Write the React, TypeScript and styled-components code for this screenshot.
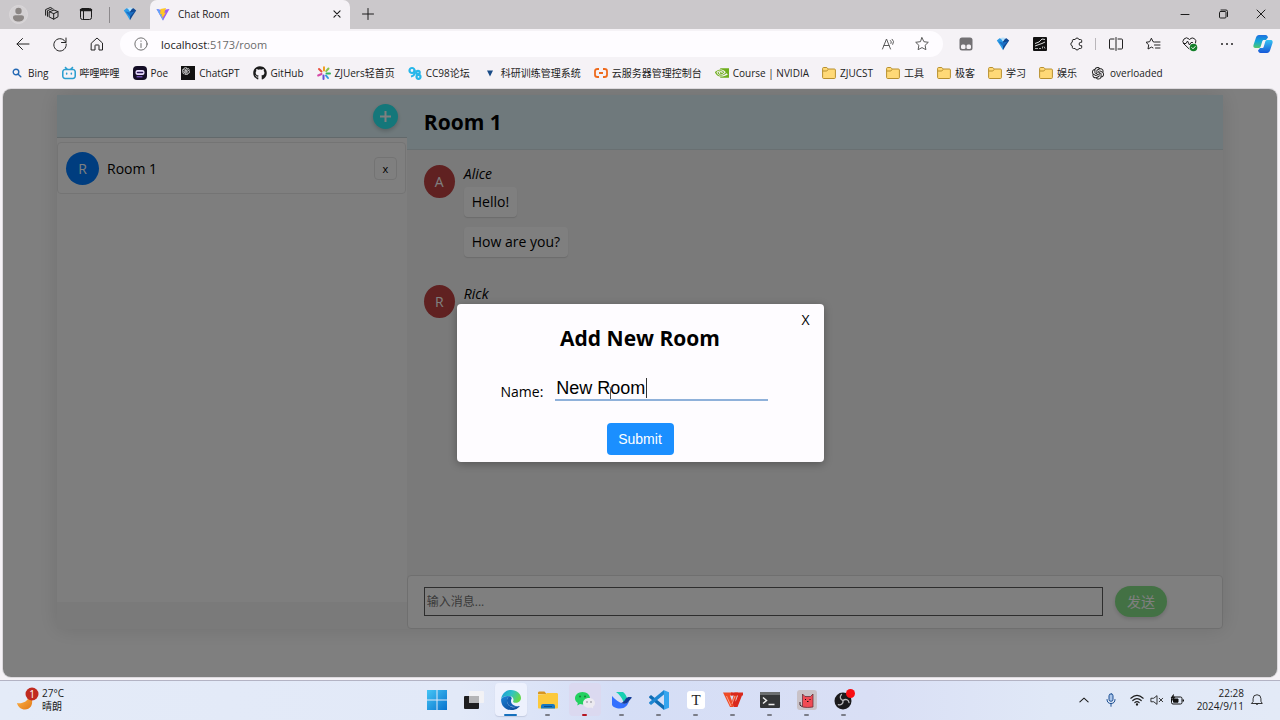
import React, { useState } from "react";
import styled, { createGlobalStyle, css } from "styled-components";
import { FaGithub } from "react-icons/fa";
import { AiOutlineOpenAI } from "react-icons/ai";
import { SiBilibili, SiNvidia } from "react-icons/si";

const uiFont = `"Open Sans", "Noto Sans CJK SC", sans-serif`;

const GlobalStyle = createGlobalStyle`
  *, *::before, *::after { box-sizing: border-box; }
  body { margin: 0; font-family: ${uiFont}; color: #000; background: #f5f2f6; }
  button, input { font-family: inherit; margin: 0; }
  button { border: 0; background: none; padding: 0; color: inherit; cursor: pointer; }
  h1, h2, p, ul { margin: 0; padding: 0; }
  ul { list-style: none; }
  svg { display: block; flex: none; }
`;

/* ---------- browser chrome ---------- */

const Desktop = styled.div`
  min-height: 100vh;
  display: flex;
  flex-direction: column;
`;

const TabStrip = styled.header`
  height: 29px;
  display: flex;
  align-items: stretch;
  padding-left: 1px;
  background: #cbc8cb;
  color: #1c1c1c;
`;

const IconButton = styled.button<{ $width?: number }>`
  width: ${(p) => p.$width ?? 37}px;
  flex: none;
  display: flex;
  align-items: center;
  justify-content: center;
  padding-bottom: 1px;
`;

const StripDivider = styled.span`
  width: 1px;
  height: 16px;
  margin: 0 0 0 6px;
  align-self: center;
  background: #8c898c;
`;

const Tab = styled.div`
  width: 200px;
  display: flex;
  align-items: center;
  gap: 8px;
  padding: 0 6px 1px;
  border-radius: 7px 7px 0 0;
  background: #f5f2f6;
  font-size: 10px;
`;

const TabTitle = styled.span`
  flex: 1;
`;

const Spacer = styled.span`
  flex: 1;
`;

const Toolbar = styled.nav`
  height: 30px;
  display: flex;
  align-items: stretch;
  padding-left: 4px;
  color: #222;
`;

const AddressBar = styled.form`
  flex: 1;
  min-width: 0;
  height: 26px;
  margin: 0 4px 0 5px;
  align-self: center;
  display: flex;
  align-items: center;
  padding: 0 5px;
  border-radius: 13px;
  background: #fefcff;
  color: #5b5b5b;
`;

const Url = styled.span`
  flex: 1;
  margin-left: 4px;
  font-size: 11px;
  color: #6b6b6b;

  strong {
    font-weight: 400;
    color: #1a1a1a;
  }
`;

const ToolDivider = styled.span`
  width: 1px;
  height: 12px;
  margin-right: 1px;
  align-self: center;
  background: #b9b6ba;
`;

const Bookmarks = styled.ul`
  height: 28px;
  display: flex;
  align-items: center;
  gap: 13px;
  padding-left: 10px;
  overflow: hidden;
`;

const Bookmark = styled.a`
  display: flex;
  align-items: center;
  gap: 4px;
  font-size: 10px;
  line-height: 14px;
  color: #222;
  white-space: nowrap;
  text-decoration: none;
`;

/* ---------- chat page ---------- */

const Page = styled.main`
  position: relative;
  flex: 1;
  display: flex;
  margin: 2px 3px 3px;
  padding: 6px 54px 48px;
  border-radius: 8px;
  overflow: hidden;
  background: #fff;
  box-shadow: 0 0 0 1px #dcd9dd;
`;

const Chat = styled.div`
  flex: 1;
  display: flex;
  background: #f4f4f4;
  box-shadow: 0 0 20px rgba(0, 0, 0, 0.12);
`;

const Sidebar = styled.aside`
  width: 30%;
  display: flex;
  flex-direction: column;
  margin-bottom: 27px;
  background: #fdfdfd;
`;

const SidebarHeader = styled.header`
  height: 43px;
  display: flex;
  align-items: center;
  justify-content: flex-end;
  padding: 0 9px;
  margin-bottom: 4px;
  border-bottom: 1px solid #c4d2d6;
  background: #dff3f8;
`;

const AddButton = styled.button`
  width: 25px;
  height: 25px;
  display: flex;
  align-items: center;
  justify-content: center;
  border-radius: 50%;
  background: #28eef4;
  color: #fff;
  box-shadow: 0 2px 4px rgba(0, 0, 0, 0.2);
`;

const RoomList = styled.ul`
  && {
    padding-right: 1px;
  }
`;

const Room = styled.li`
  height: 52px;
  display: flex;
  align-items: center;
  gap: 8px;
  padding: 0 8px;
  border: 1px solid #e8e8e8;
  border-radius: 4px;
  background: #fff;
  font-size: 14px;
`;

const Avatar = styled.span<{ $color: string; $width?: number }>`
  width: ${(p) => p.$width ?? 33}px;
  height: 33px;
  flex: none;
  display: flex;
  align-items: center;
  justify-content: center;
  border-radius: 50%;
  background: ${(p) => p.$color};
  color: #fff;
  font-size: 14px;
`;

const RoomName = styled.span`
  flex: 1;
`;

const DeleteButton = styled.button`
  width: 23px;
  height: 23px;
  border: 1px solid #e6e6e6;
  border-radius: 4px;
  font-size: 11px;
`;

const Conversation = styled.section`
  flex: 1;
  min-width: 0;
  display: flex;
  flex-direction: column;
`;

const RoomHeader = styled.header`
  height: 55px;
  display: flex;
  align-items: center;
  padding: 0 17px;
  border-bottom: 1px solid #d2e0e4;
  background: #dff3f8;
`;

const Title = styled.h1`
  font-size: 21px;
  line-height: 28px;
`;

const Messages = styled.ul`
  && {
    flex: 1;
    display: flex;
    flex-direction: column;
    gap: 28px;
    padding: 15px 17px;
  }
`;

const Message = styled.li`
  display: flex;
  align-items: flex-start;
  gap: 9px;
  font-size: 14px;
  line-height: 18px;
`;

const MessageBody = styled.div`
  display: flex;
  flex-direction: column;
  align-items: flex-start;
  gap: 10px;
`;

const Author = styled.em`
  margin-bottom: -6px;
`;

const Bubble = styled.p`
  && {
    padding: 6px 8px;
  }
  border-radius: 4px;
  background: #fff;
  box-shadow: 0 1px 1px rgba(0, 0, 0, 0.12);
`;

const Composer = styled.form`
  height: 54px;
  display: flex;
  align-items: center;
  gap: 12px;
  padding: 0 55px 2px 16px;
  border: 1px solid #dedede;
  border-radius: 4px;
  background: #fff;
`;

const MessageInput = styled.input`
  flex: 1;
  min-width: 0;
  height: 29px;
  padding: 1px 2px;
  border: 1px solid #5a5a5a;
  background: #fff;
  font-size: 12px;

  &::placeholder {
    color: #757575;
    opacity: 1;
  }
`;

const SendButton = styled.button`
  width: 52px;
  height: 31px;
  border-radius: 16px;
  background: #86e389;
  color: #fff;
  font-size: 14px;
  box-shadow: 0 2px 4px rgba(0, 0, 0, 0.15);
`;

/* ---------- dialog ---------- */

const Backdrop = styled.div`
  position: absolute;
  inset: 0;
  display: flex;
  align-items: center;
  justify-content: center;
  background: rgba(0, 0, 0, 0.5);
`;

const Dialog = styled.form`
  position: relative;
  width: 367px;
  display: flex;
  flex-direction: column;
  align-items: center;
  padding: 20px 44px 7px;
  border-radius: 4px;
  background: #fefcff;
  box-shadow: 0 2px 8px rgba(0, 0, 0, 0.3);
`;

const DialogClose = styled.button`
  position: absolute;
  top: 6px;
  right: 14px;
  font-size: 14px;
  line-height: 19px;
`;

const DialogTitle = styled.h2`
  font-size: 21px;
  line-height: 28px;
`;

const Field = styled.div`
  align-self: stretch;
  display: flex;
  align-items: flex-end;
  gap: 12px;
  margin: 22px 0;
  padding-right: 12px;
  font-size: 14px;
  line-height: 19px;
`;

const InputWrap = styled.div`
  position: relative;
  flex: 1;
  min-width: 0;
`;

const NameInput = styled.input`
  display: block;
  width: 100%;
  height: 27px;
  padding: 3px 1px 0;
  border: 0;
  border-bottom: 2px solid #8fb1da;
  outline: none;
  background: transparent;
  font-family: "Liberation Sans", sans-serif;
  font-size: 18px;
`;

const Caret = styled.span`
  position: absolute;
  left: 91px;
  top: 4px;
  width: 1px;
  height: 20px;
  background: #333;
`;

const Pointer = styled.svg`
  position: absolute;
  left: 52px;
  top: 12px;
`;

const SubmitButton = styled.button`
  width: 67px;
  height: 32px;
  border-radius: 4px;
  background: #1b8fff;
  color: #fff;
  font-family: "Liberation Sans", sans-serif;
  font-size: 14px;
`;

/* ---------- taskbar ---------- */

const Taskbar = styled.footer`
  height: 40px;
  display: grid;
  grid-template-columns: 1fr auto 1fr;
  align-items: center;
  padding-bottom: 2px;
  border-top: 1px solid #b3b3c4;
  background: linear-gradient(90deg, #e4ebf8 0%, #e2e9f8 36%, #d5def6 48%, #d9dff5 68%, #e0e8f7 82%, #e3eaf7 100%);
  font-size: 10px;
  line-height: 13px;
  color: #1b1b1b;
`;

const Weather = styled.div`
  display: flex;
  align-items: center;
  gap: 2px;
  padding-left: 16px;
`;

const Apps = styled.div`
  display: flex;
  gap: 5px;
`;

const AppButton = styled.button<{ $active?: boolean; $alert?: boolean }>`
  position: relative;
  width: 32px;
  height: 33px;
  display: flex;
  align-items: center;
  justify-content: center;
  border-radius: 4px;
  ${(p) => p.$active && css`background: #edf1fd; box-shadow: 0 1px 1px #c3cbe0;`}
  ${(p) => p.$alert && css`background: #dbd9f0;`}
`;

const Running = styled.span<{ $color: string; $wide?: boolean }>`
  position: absolute;
  bottom: 0;
  width: ${(p) => (p.$wide ? 13 : 5)}px;
  height: 2px;
  border-radius: 1px;
  background: ${(p) => p.$color};
`;

const Tray = styled.div`
  display: flex;
  align-items: center;
  justify-content: flex-end;
  padding-right: 11px;
`;

const TrayButton = styled.button<{ $width: number }>`
  width: ${(p) => p.$width}px;
  display: flex;
  justify-content: center;
`;

const Clock = styled.time`
  width: 54px;
  text-align: right;
`;

/* ---------- icons ---------- */

type LineProps = { size?: number; w?: number; children: React.ReactNode };

const Line = ({ size = 16, w = 1, children }: LineProps) => (
  <svg width={size} height={size} viewBox="0 0 16 16" fill="none" stroke="currentColor" strokeWidth={w} strokeLinecap="round" strokeLinejoin="round" aria-hidden="true">
    {children}
  </svg>
);

const ProfileIcon = () => (
  <svg width="19" height="19" viewBox="0 0 19 19" aria-hidden="true">
    <circle cx="9.500" cy="9.500" r="9" fill="#d4d1d3" stroke="#dad7d9" />
    <circle cx="9.500" cy="6" r="3.200" fill="#8b8684" />
    <path d="M4 12.500c0-1.600 1-2.300 2.500-2.300h6c1.500 0 2.500.7 2.500 2.300 0 2.500-2.300 4-5.500 4s-5.500-1.500-5.500-4z" fill="#8b8684" />
  </svg>
);

const WorkspacesIcon = () => (
  <Line>
    <path d="M5.500 5.800 10 4l4 1.600v5.200l-4.300 2.400-4.200-2.100zM5.500 5.800l4.200 1.900L14 5.600M9.700 7.700v5.500" />
    <path d="M3.500 10.300 3.400 4.700 8.200 2.700l1 .4M1.600 9.200V3.600L6.300 1.500l1.100.4" />
  </Line>
);

const TabActionsIcon = () => (
  <Line>
    <rect x="2.500" y="2.500" width="11" height="11" rx="2" />
    <path d="M3 4h10" strokeWidth="2.500" />
    <path d="M5.500 4v9" />
  </Line>
);

const FunnelIcon = () => (
  <svg width="14" height="14" viewBox="0 0 14 14" aria-hidden="true">
    <path d="M.8 3.500 3.500 1.200Q5.500 1 7 4v9.200L4.500 9z" fill="#2d9be6" />
    <path d="M13.200 3.500 10.500 1.200Q8.500 1 7 4v9.200L9.500 9z" fill="#114a94" />
    <path d="M4.500 1Q7-.2 9.500 1L7 4.500z" fill="#b7e1fb" />
    <path d="m2.500 4.500 4.500 1 4.500-1L7 9.500z" fill="#1b6fc4" />
  </svg>
);

const ViteIcon = () => (
  <svg width="14" height="14" viewBox="0 0 14 14" aria-hidden="true">
    <path d="M.5 2 6 3l7.500-1L7 13.500z" fill="#9b5cf4" />
    <path d="M.5 2 3 2.500 7.500 12 7 13.500z" fill="#5fa8f7" />
    <path d="M10 1 4.500 2l-.4 5.200 1.700-.3-.4 2.700 1.200-.3-.4 2.500 3.800-6.200-1.800.3z" fill="#ffc824" />
  </svg>
);

const ReadAloudIcon = () => (
  <Line>
    <path d="M1.500 13 5.500 3l4 10M3 9.500h5M9.500 4.500q1.500 1.200.5 3M11.200 3.200q2.600 2 .6 5.200" />
  </Line>
);

const StarIcon = () => (
  <Line>
    <path d="m8 1.700 1.900 4 4.400.6-3.200 3 .8 4.400L8 11.600l-3.900 2.100.8-4.400-3.200-3 4.400-.6z" />
  </Line>
);

const ExtensionPanelIcon = () => (
  <svg width="14" height="14" viewBox="0 0 14 14" aria-hidden="true">
    <rect x=".5" y=".5" width="13" height="13" rx="2.500" fill="#737174" />
    <rect x="2" y="7.500" width="4.500" height="4.500" rx="1.500" fill="#f5f2f6" />
    <rect x="7.500" y="7.500" width="4.500" height="4.500" rx="1.500" fill="#f5f2f6" />
  </svg>
);

const NotesExtensionIcon = () => (
  <svg width="14" height="14" viewBox="0 0 14 14" fill="none" stroke="#ddd" aria-hidden="true">
    <rect width="14" height="14" rx="1" fill="#111" stroke="none" />
    <path d="M2 6.500 6 5l3-3 3 .5M2 9l4-1.500 3-1L12 5" />
    <path d="M2 11.500h3m1 0h2m1.500-2v2m1.500-2 1 2" stroke="#aaa" />
  </svg>
);

const PuzzleIcon = () => (
  <Line>
    <path d="M4.500 3.500h1.700a1.900 1.900 0 0 1 3.700 0h1.600a1.200 1.200 0 0 1 1.200 1.200v1.600h-.9a1.700 1.700 0 0 0 0 3.400h.9v1.600a1.200 1.200 0 0 1-1.200 1.200H9.900a1.900 1.900 0 0 1-3.700 0H4.500a1.200 1.200 0 0 1-1.200-1.200V9.900a1.900 1.900 0 0 1 0-3.700V4.700a1.200 1.200 0 0 1 1.200-1.200z" />
  </Line>
);

const SplitIcon = () => (
  <Line>
    <path d="M6 3H2.500a1 1 0 0 0-1 1v8a1 1 0 0 0 1 1H6M10 3h3.500a1 1 0 0 1 1 1v8a1 1 0 0 1-1 1H10M8 1.500v13" />
  </Line>
);

const FavoritesIcon = () => (
  <Line>
    <path d="M9.200 6 8 5.700 6.400 2.200l-1.700 3.500-3.700.6 2.700 2.600L3 13l3.500-1.900 1.500.8M10 6h5M9.500 9H15M10.500 12H15" />
  </Line>
);

const EssentialsIcon = () => (
  <svg width="16" height="16" viewBox="0 0 16 16" fill="none" stroke="#222" strokeLinecap="round" strokeLinejoin="round" aria-hidden="true">
    <path d="M7 12.800 2 8a3.500 3.500 0 0 1 5-5l.5.6L8 3a3.500 3.500 0 0 1 5.600 4" />
    <path d="M1.500 7.500H4L5.500 5l2 4L9 6.500h1.500" />
    <circle cx="11.500" cy="11.500" r="3.800" fill="#13802a" stroke="none" />
    <path d="m9.800 11.600 1.200 1.200 2.200-2.300" stroke="#fff" />
  </svg>
);

const CopilotIcon = () => (
  <svg width="20" height="20" viewBox="0 0 20 20" aria-hidden="true">
    <defs>
      <linearGradient id="cpl" x1="0" y1="0" x2="0" y2="1">
        <stop offset="0" stopColor="#1f6fe0" /><stop offset=".5" stopColor="#12a9d8" /><stop offset="1" stopColor="#52c86a" />
      </linearGradient>
      <linearGradient id="cpr" x1="0" y1="0" x2="0" y2="1">
        <stop offset="0" stopColor="#35c3f2" /><stop offset="1" stopColor="#1657d8" />
      </linearGradient>
    </defs>
    <path d="M6 1h6.500c1.500 0 2 1 2.500 2.500L13 6h-2c-1 0-1.500.5-1.800 1.500l-1.500 5C7.300 13.800 6.500 14 5 14H2.500C.8 14 0 13 .5 11L3 3.500C3.500 2 4.500 1 6 1z" fill="url(#cpl)" />
    <path d="M14 19H7.500C6 19 5.500 18 5 16.500L7 14h2c1 0 1.500-.5 1.800-1.500l1.500-5C12.700 6.200 13.500 6 15 6h2.500c1.700 0 2.500 1 2 3L17 16.500c-.5 1.500-1.500 2.500-3 2.500z" fill="url(#cpr)" />
  </svg>
);

const FolderIcon = () => (
  <svg width="14" height="14" viewBox="0 0 14 14" fill="#ffd977" stroke="#b8902f" aria-hidden="true">
    <path d="M.6 2.500c0-.6.4-1 1-1h3.200L6.300 3h6.100c.6 0 1 .4 1 1v7.500c0 .6-.4 1-1 1H1.600c-.6 0-1-.4-1-1z" />
    <path d="M.8 5h4l1.500-1.800" fill="none" />
  </svg>
);

const PoeIcon = () => (
  <svg width="14" height="14" viewBox="0 0 14 14" aria-hidden="true">
    <rect width="14" height="14" rx="4" fill="#140d26" />
    <rect x="2.500" y="4" width="9" height="5" rx="2" fill="#e9dcff" />
    <path d="M4.500 6.500h5" stroke="#2b1555" strokeWidth="1.600" strokeLinecap="round" />
    <path d="M4 10.800h5" stroke="#9a6bf2" strokeLinecap="round" />
  </svg>
);

const ChatGptIcon = () => (
  <svg width="14" height="14" viewBox="0 0 14 14" aria-hidden="true">
    <rect width="14" height="14" fill="#111" />
    <AiOutlineOpenAI x="0" y="0" width="14" height="14" color="#fff" />
  </svg>
);

const BurstIcon = () => (
  <svg width="14" height="14" viewBox="0 0 14 14" strokeWidth="2" strokeLinecap="round" aria-hidden="true">
    <path d="M7 1.200v3.300" stroke="#f0a020" /><path d="m11.500 2.500-2.300 2.600" stroke="#8bc34a" />
    <path d="M13 7.500H9.500" stroke="#36b35a" /><path d="m9 9.500 2 2.500" stroke="#2d9be6" />
    <path d="M6.500 9.500V13" stroke="#6b4fd8" /><path d="M4.500 8 1.200 9.500" stroke="#d64aa8" />
    <path d="M4.500 5.500 2 3" stroke="#e9503e" />
  </svg>
);

const Cc98Icon = () => (
  <svg width="14" height="14" viewBox="0 0 14 14" fill="none" stroke="#27b7ea" strokeWidth="2.200" aria-hidden="true">
    <circle cx="4" cy="4.500" r="2.500" /><path d="M6.500 4c1 4-.5 6-3.500 6.500" />
    <circle cx="10" cy="6.500" r="1.700" /><circle cx="10.500" cy="10.800" r="2" />
  </svg>
);

const TriangleIcon = () => (
  <svg width="14" height="14" viewBox="0 0 14 14" aria-hidden="true"><path d="M4 4.500h6L7 10.500z" fill="#184a86" /></svg>
);

const CloudConsoleIcon = () => (
  <svg width="14" height="14" viewBox="0 0 14 14" fill="none" stroke="#ee6a1d" strokeWidth="1.800" aria-hidden="true">
    <path d="M5 3H3.500Q1 3 1 5v4q0 2 2.500 2H5M9 3h1.500Q13 3 13 5v4q0 2-2.500 2H9M5 7h4" />
  </svg>
);

const BingSearchIcon = () => (
  <svg width="14" height="14" viewBox="0 0 14 14" fill="none" stroke="#2469b4" strokeWidth="1.400" strokeLinecap="round" aria-hidden="true">
    <circle cx="6" cy="6" r="2.800" /><path d="m8.200 8.200 2.600 2.600" />
  </svg>
);

const MoonIcon = () => (
  <svg width="24" height="26" viewBox="0 0 24 26" aria-hidden="true">
    <defs>
      <linearGradient id="moon" x1="0" y1="0" x2="1" y2="1"><stop offset="0" stopColor="#ffb648" /><stop offset="1" stopColor="#e07818" /></linearGradient>
    </defs>
    <path d="M1 16c5 1 10-1 12-6l3 3c1 5-2 9.500-7 9.500-4 0-7-2.500-8-6.500z" fill="url(#moon)" />
    <circle cx="16" cy="7" r="6.500" fill="#c02b20" />
    <text x="16" y="11" fontSize="10" fill="#fff" textAnchor="middle">1</text>
  </svg>
);

const WindowsIcon = () => (
  <svg width="20" height="20" viewBox="0 0 20 20" aria-hidden="true">
    <defs><linearGradient id="win" x1="0" y1="0" x2="1" y2="1"><stop offset="0" stopColor="#45c5f5" /><stop offset="1" stopColor="#0873ce" /></linearGradient></defs>
    <path d="M0 0h9.500v9.500H0zM10.500 0H20v9.500h-9.500zM0 10.500h9.500V20H0zM10.500 10.500H20V20h-9.500z" fill="url(#win)" />
  </svg>
);

const TaskViewIcon = () => (
  <svg width="20" height="20" viewBox="0 0 20 20" aria-hidden="true">
    <rect x="0" y="6" width="15" height="13" rx="1" fill="#1d1d1f" />
    <rect x="5" y="1" width="15" height="12" rx="1" fill="#f4f3f5" fillOpacity=".85" />
    <path d="M5 6h10v7H5z" fill="#b5b5b7" />
  </svg>
);

const EdgeIcon = () => (
  <svg width="20" height="20" viewBox="0 0 20 20" aria-hidden="true">
    <defs>
      <linearGradient id="edg" x1="0" y1="0" x2="1" y2=".4"><stop offset="0" stopColor="#1697d8" /><stop offset=".55" stopColor="#2fc2c4" /><stop offset="1" stopColor="#62d84e" /></linearGradient>
      <linearGradient id="edb" x1="0" y1="0" x2=".6" y2="1"><stop offset="0" stopColor="#1b84d8" /><stop offset="1" stopColor="#0d4f9e" /></linearGradient>
    </defs>
    <path d="M.2 9C1 3.500 5 0 10 0c6 0 10 4 10 8 0 3-2.500 4.800-5.200 4.800-2.300 0-3-.9-2.600-1.700.9-1.900-.2-4.700-3.700-5.100C4.500 5.700 1.500 7 .2 9z" fill="url(#edg)" />
    <path d="M.2 9C2 6.500 5 5.600 8.500 6 6 7.500 5.300 11 6.700 13.700c1.700 3.300 5.800 4.300 9.300 3.100l2-.8c.5-.2.8.2.4.7A10 10 0 0 1 10 20C4 20-.5 15 .2 9z" fill="url(#edb)" />
    <path d="M8.500 6C6 7.500 5.300 11 6.700 13.700 8.400 17 13 18 18.300 15.800c-3.400.9-8.300-.3-8.300-4.700 0-1.700.8-2.700.8-2.700-.4-1.300-1.200-2.100-2.300-2.400z" fill="#1262b5" />
  </svg>
);

const ExplorerIcon = () => (
  <svg width="20" height="20" viewBox="0 0 20 20" aria-hidden="true">
    <path d="M0 3c0-1 .5-1.500 1.500-1.500h5L8.500 4H0z" fill="#d8961f" />
    <path d="M0 4.500 8 4l1-1h9.500c1 0 1.500.5 1.500 1.500v13c0 .6-.4 1-1 1H1c-.6 0-1-.4-1-1z" fill="#fcc93c" />
    <path d="M3 18.500V16q0-2 2-2h10q2 0 2 2v2.500z" fill="#1778c4" />
    <path d="M6 16.500h8" stroke="#0b4e8a" />
  </svg>
);

const WeChatIcon = () => (
  <svg width="20" height="18" viewBox="0 0 20 18" aria-hidden="true">
    <path d="M7.500 1C3.300 1 0 3.800 0 7.200c0 2 1.100 3.700 2.800 4.800L2.300 14.500 5 13.100c5 1.300 10-1.400 10-5.900C15 3.800 11.700 1 7.500 1z" fill="#23d160" />
    <path d="M14 7c3.400 0 6 2.200 6 5 0 1.600-.8 2.900-2.100 3.800l.3 1.800-2-1c-4.200.9-8.200-1.100-8.200-4.600 0-2.800 2.600-5 6-5z" fill="#eceaf0" />
    <g fill="#1a7a3c"><circle cx="5" cy="5.500" r="1" /><circle cx="10" cy="5.500" r="1" /></g>
    <g fill="#808088"><circle cx="12" cy="11" r=".8" /><circle cx="16" cy="11" r=".8" /></g>
  </svg>
);

const BirdIcon = () => (
  <svg width="20" height="18" viewBox="0 0 20 18" aria-hidden="true">
    <path d="M4 1h7c2 1.500 3.500 4 4 6l-3.500 4C10 7 7.500 3.500 4 1z" fill="#17cfb2" />
    <path d="M0 5c3 3.500 7 6.500 11 7.500 3 .5 5-1 6-2.500-1 4-4 7.500-9 7.500-4 0-8-2-8-4z" fill="#3370ff" />
    <path d="M20 6.500c-2.500-1-5-.5-6.500 1.500S11 11.500 9 12c3.500 1.500 6.500.5 8-2z" fill="#123b96" />
  </svg>
);

const CodeIcon = () => (
  <svg width="20" height="20" viewBox="0 0 20 20" aria-hidden="true">
    <path d="M0 6.700 2 5l13 10.500V20L.2 7.800z" fill="#0f6cb4" />
    <path d="M0 13.300 2 15 15 4.500V0L.2 12.200z" fill="#1d86d2" />
    <path d="M14.500 0 20 2.300v15.400L14.500 20c.3-.2.500-.5.500-1V1c0-.5-.2-.8-.5-1z" fill="#35a5ef" />
  </svg>
);

const TyporaIcon = () => (
  <svg width="18" height="18" viewBox="0 0 18 18" aria-hidden="true">
    <rect width="18" height="18" rx="3" fill="#fff" />
    <text x="9" y="14" fontSize="15" fontFamily="Liberation Serif, serif" fill="#222" textAnchor="middle">T</text>
  </svg>
);

const WpsIcon = () => (
  <svg width="20" height="16" viewBox="0 0 20 16" fill="none" aria-hidden="true">
    <path d="M0 .5h9.500v3H7L9 9l2.500-8.500H15L10.500 15H7z" fill="#ee4a26" />
    <path d="M8 .5h12v3h-1L14.500 15H11L9.500 10 11 6l1.700 3.500L15 3.500H8z" fill="#d9281c" />
    <path d="M3.500 4 8 14M12 4l-3 8" stroke="#ffb59e" strokeWidth=".8" />
  </svg>
);

const TerminalIcon = () => (
  <svg width="20" height="16" viewBox="0 0 20 16" aria-hidden="true">
    <rect width="20" height="16" rx="1" fill="#343638" />
    <path d="M0 1q0-1 1-1h18q1 0 1 1v2H0z" fill="#6b6e70" />
    <path d="m3 5.500 3.500 3L3 11.500M8.500 12.500h6" fill="none" stroke="#eee" strokeWidth="1.500" />
  </svg>
);

const CatIcon = () => (
  <svg width="20" height="20" viewBox="0 0 20 20" aria-hidden="true">
    <rect width="20" height="20" rx="3" fill="#c9c2c7" />
    <path d="M5.500 17V4L8 6.500h5.500L16 4v13q-5.500 1-10.500 0z" fill="#f04a54" stroke="#5a2530" strokeWidth=".7" strokeLinejoin="round" />
    <path d="M5 16.500Q2 16 3 12" fill="none" stroke="#40202a" />
    <path d="M8.500 9v1M13 9v1M10 11.500h1.500" stroke="#111" />
  </svg>
);

const ObsIcon = () => (
  <svg width="22" height="22" viewBox="0 0 22 22" fill="none" stroke="#b9b8bb" strokeWidth="1.300" strokeLinecap="round" aria-hidden="true">
    <circle cx="10" cy="12" r="8.500" fill="#1b1a1c" stroke="none" />
    <path d="M10 11.500C7 10.500 6.500 7.500 8.500 5.500" />
    <path d="M10 11.500c2.500-2 5.500-.8 6 2" />
    <path d="M10 11.500c.5 3-2 5-4.700 4.200" />
    <circle cx="17.500" cy="4.500" r="4.500" fill="#f80d12" stroke="none" />
  </svg>
);

const WifiIcon = () => (
  <Line size={14} w={1.3}>
    <path d="M1 6q7-6.500 14 0M3.200 8.600q4.800-4.400 9.600 0M5.500 11q2.500-2.200 5 0" /><circle cx="8" cy="13" r=".7" />
  </Line>
);

const MicIcon = () => (
  <svg width="14" height="14" viewBox="0 0 14 14" fill="none" stroke="#1c4f93" strokeLinecap="round" aria-hidden="true">
    <rect x="5" y=".8" width="4" height="7.500" rx="2" fill="#a9c4ea" /><path d="M3 6.500q0 4 4 4t4-4M7 10.500v2.800" />
  </svg>
);

const MutedIcon = () => (
  <Line size={14}>
    <path d="M1.500 6h2.800L8 3v10l-3.700-3H1.500zM10.500 6l4 4m0-4-4 4" />
  </Line>
);

const BatteryIcon = () => (
  <svg width="14" height="14" viewBox="0 0 14 14" fill="none" stroke="#111" aria-hidden="true">
    <rect x="1.500" y="4" width="10.500" height="7" rx="1.500" /><path d="M3.500 6h4.500v3.200H3.500z" fill="#111" /><path d="M13.300 6.500v2" strokeWidth="1.400" />
    <path d="M3.500 1.500 1 5h2l-.8 2.500L5 4.200H3.200z" fill="#111" strokeWidth=".6" />
  </svg>
);

const BellIcon = () => (
  <Line size={14}>
    <path d="M2 12h12l-1.500-2.500V6.500a4.500 4.500 0 0 0-9 0v3zM6.500 12.300q1.500 2.400 3 0" />
  </Line>
);

/* ---------- data ---------- */

const bookmarks: { label: string; icon: React.ReactNode }[] = [
  { label: "Bing", icon: <BingSearchIcon /> },
  { label: "哔哩哔哩", icon: <SiBilibili size={14} color="#2b9fd0" /> },
  { label: "Poe", icon: <PoeIcon /> },
  { label: "ChatGPT", icon: <ChatGptIcon /> },
  { label: "GitHub", icon: <FaGithub size={14} color="#1b1b1b" /> },
  { label: "ZJUers轻首页", icon: <BurstIcon /> },
  { label: "CC98论坛", icon: <Cc98Icon /> },
  { label: "科研训练管理系统", icon: <TriangleIcon /> },
  { label: "云服务器管理控制台", icon: <CloudConsoleIcon /> },
  { label: "Course | NVIDIA", icon: <SiNvidia size={14} color="#6fae1c" /> },
  { label: "ZJUCST", icon: <FolderIcon /> },
  { label: "工具", icon: <FolderIcon /> },
  { label: "极客", icon: <FolderIcon /> },
  { label: "学习", icon: <FolderIcon /> },
  { label: "娱乐", icon: <FolderIcon /> },
  { label: "overloaded", icon: <AiOutlineOpenAI size={16} color="#222" /> },
];

type AppEntry = { name: string; icon: React.ReactNode; running?: string; active?: boolean; alert?: boolean };

const apps: AppEntry[] = [
  { name: "Start", icon: <WindowsIcon /> },
  { name: "Task view", icon: <TaskViewIcon /> },
  { name: "Edge", icon: <EdgeIcon />, running: "#1670bd", active: true },
  { name: "File Explorer", icon: <ExplorerIcon />, running: "#7a7d88" },
  { name: "WeChat", icon: <WeChatIcon />, running: "#b51420", alert: true },
  { name: "Feishu", icon: <BirdIcon />, running: "#7a7d88" },
  { name: "VS Code", icon: <CodeIcon />, running: "#7a7d88" },
  { name: "Typora", icon: <TyporaIcon />, running: "#7a7d88" },
  { name: "WPS", icon: <WpsIcon />, running: "#7a7d88" },
  { name: "Terminal", icon: <TerminalIcon />, running: "#7a7d88" },
  { name: "Clash", icon: <CatIcon />, running: "#7a7d88" },
  { name: "OBS", icon: <ObsIcon />, running: "#7a7d88" },
];

const messages: { author: string; lines: string[] }[] = [
  { author: "Alice", lines: ["Hello!", "How are you?"] },
  { author: "Rick", lines: [] },
];

export default function App() {
  const [name, setName] = useState("New Room");
  const stop = (e: React.FormEvent) => e.preventDefault();

  return (
    <Desktop>
      <GlobalStyle />
      <TabStrip>
        <IconButton $width={34} aria-label="Profile"><ProfileIcon /></IconButton>
        <IconButton $width={34} aria-label="Workspaces"><WorkspacesIcon /></IconButton>
        <IconButton $width={34} aria-label="Tab actions"><TabActionsIcon /></IconButton>
        <StripDivider />
        <IconButton $width={40} aria-label="Pinned tab"><FunnelIcon /></IconButton>
        <Tab>
          <ViteIcon />
          <TabTitle>Chat Room</TabTitle>
          <IconButton $width={14} aria-label="Close tab"><Line size={14} w={1.3}><path d="m4.500 4.500 7 7m0-7-7 7" /></Line></IconButton>
        </Tab>
        <IconButton $width={36} aria-label="New tab"><Line><path d="M8 2.500v11M2.500 8h11" /></Line></IconButton>
        <Spacer />
        <IconButton $width={38} aria-label="Minimize"><Line><path d="M4 8.500h8" /></Line></IconButton>
        <IconButton $width={38} aria-label="Restore"><Line><rect x="4.500" y="5.500" width="6.500" height="6.500" rx="1" /><path d="M6 4h5q1.500 0 1.500 1.500v5" /></Line></IconButton>
        <IconButton $width={38} aria-label="Close"><Line><path d="m4 4 8 8m0-8-8 8" /></Line></IconButton>
      </TabStrip>

      <Toolbar>
        <IconButton aria-label="Back"><Line><path d="M14 8H2m5.500-5.500L2 8l5.500 5.500" /></Line></IconButton>
        <IconButton aria-label="Reload"><Line><path d="M13.800 6.500A6.200 6.200 0 1 0 14.200 8M14 2v4.500H9.500" /></Line></IconButton>
        <IconButton aria-label="Home"><Line><path d="M2.500 7 8 2l5.500 5v7H10V9.500q0-.5-.5-.5h-3q-.5 0-.5.500V14H2.500z" /></Line></IconButton>
        <AddressBar onSubmit={stop}>
          <IconButton type="button" $width={32} aria-label="Site information">
            <Line size={14}><circle cx="8" cy="8" r="7" /><path d="M8 7.500V12M8 4.500v.5" /></Line>
          </IconButton>
          <Url><strong>localhost</strong>:5173/room</Url>
          <IconButton type="button" $width={33} aria-label="Read aloud"><ReadAloudIcon /></IconButton>
          <IconButton type="button" $width={33} aria-label="Add to favorites"><StarIcon /></IconButton>
        </AddressBar>
        <IconButton aria-label="Extension panel"><ExtensionPanelIcon /></IconButton>
        <IconButton aria-label="Extension"><FunnelIcon /></IconButton>
        <IconButton aria-label="Notes"><NotesExtensionIcon /></IconButton>
        <IconButton aria-label="Extensions"><PuzzleIcon /></IconButton>
        <ToolDivider />
        <IconButton aria-label="Split screen"><SplitIcon /></IconButton>
        <IconButton aria-label="Favorites"><FavoritesIcon /></IconButton>
        <IconButton aria-label="Browser essentials"><EssentialsIcon /></IconButton>
        <IconButton aria-label="More">
          <svg width="16" height="16" viewBox="0 0 16 16" fill="#222" aria-hidden="true"><circle cx="3" cy="8" r="1" /><circle cx="8" cy="8" r="1" /><circle cx="13" cy="8" r="1" /></svg>
        </IconButton>
        <IconButton $width={35} aria-label="Copilot"><CopilotIcon /></IconButton>
      </Toolbar>

      <Bookmarks>
        {bookmarks.map((b) => (
          <li key={b.label}>
            <Bookmark href="#">{b.icon}{b.label}</Bookmark>
          </li>
        ))}
      </Bookmarks>

      <Page>
        <Chat>
          <Sidebar>
            <SidebarHeader>
              <AddButton aria-label="Add room">
                <svg width="11" height="11" viewBox="0 0 11 11" stroke="currentColor" strokeWidth="2" aria-hidden="true"><path d="M5.500 0v11M0 5.500h11" /></svg>
              </AddButton>
            </SidebarHeader>
            <RoomList>
              <Room>
                <Avatar $color="#007bff">R</Avatar>
                <RoomName>Room 1</RoomName>
                <DeleteButton aria-label="Delete room">x</DeleteButton>
              </Room>
            </RoomList>
          </Sidebar>
          <Conversation>
            <RoomHeader><Title>Room 1</Title></RoomHeader>
            <Messages>
              {messages.map((m) => (
                <Message key={m.author}>
                  <Avatar $color="#c04242" $width={31}>{m.author[0]}</Avatar>
                  <MessageBody>
                    <Author>{m.author}</Author>
                    {m.lines.map((l) => <Bubble key={l}>{l}</Bubble>)}
                  </MessageBody>
                </Message>
              ))}
            </Messages>
            <Composer onSubmit={stop}>
              <MessageInput type="text" aria-label="输入消息" placeholder="输入消息..." />
              <SendButton type="submit">发送</SendButton>
            </Composer>
          </Conversation>
        </Chat>

        <Backdrop>
          <Dialog role="dialog" aria-labelledby="dialog-title" onSubmit={stop}>
            <DialogClose type="button" aria-label="Close dialog">X</DialogClose>
            <DialogTitle id="dialog-title">Add New Room</DialogTitle>
            <Field>
              <label htmlFor="room-name">Name:</label>
              <InputWrap>
                <NameInput id="room-name" type="text" value={name} onChange={(e) => setName(e.target.value)} />
                <Caret />
                <Pointer width="8" height="14" viewBox="0 0 8 14" fill="none" stroke="#555" aria-hidden="true"><path d="M2 .5 4 2.500 6 .5M3.500 2.500V13" /></Pointer>
              </InputWrap>
            </Field>
            <SubmitButton type="submit">Submit</SubmitButton>
          </Dialog>
        </Backdrop>
      </Page>

      <Taskbar>
        <Weather>
          <MoonIcon />
          <div>
            <p>27°C</p>
            <p>晴朗</p>
          </div>
        </Weather>
        <Apps>
          {apps.map((a) => (
            <AppButton key={a.name} aria-label={a.name} $active={a.active} $alert={a.alert}>
              {a.icon}
              {a.running && <Running $color={a.running} $wide={a.active} />}
            </AppButton>
          ))}
        </Apps>
        <Tray>
          <TrayButton $width={27} aria-label="Hidden icons"><Line size={12} w={1.4}><path d="m2.500 10.500 5.500-5 5.500 5" /></Line></TrayButton>
          <TrayButton $width={27} aria-label="Microphone"><MicIcon /></TrayButton>
          <TrayButton $width={26} aria-label="Network"><WifiIcon /></TrayButton>
          <TrayButton $width={14} aria-label="Volume"><MutedIcon /></TrayButton>
          <TrayButton $width={26} aria-label="Battery"><BatteryIcon /></TrayButton>
          <Clock>22:28<br />2024/9/11</Clock>
          <TrayButton $width={25} aria-label="Notifications"><BellIcon /></TrayButton>
        </Tray>
      </Taskbar>
    </Desktop>
  );
}
